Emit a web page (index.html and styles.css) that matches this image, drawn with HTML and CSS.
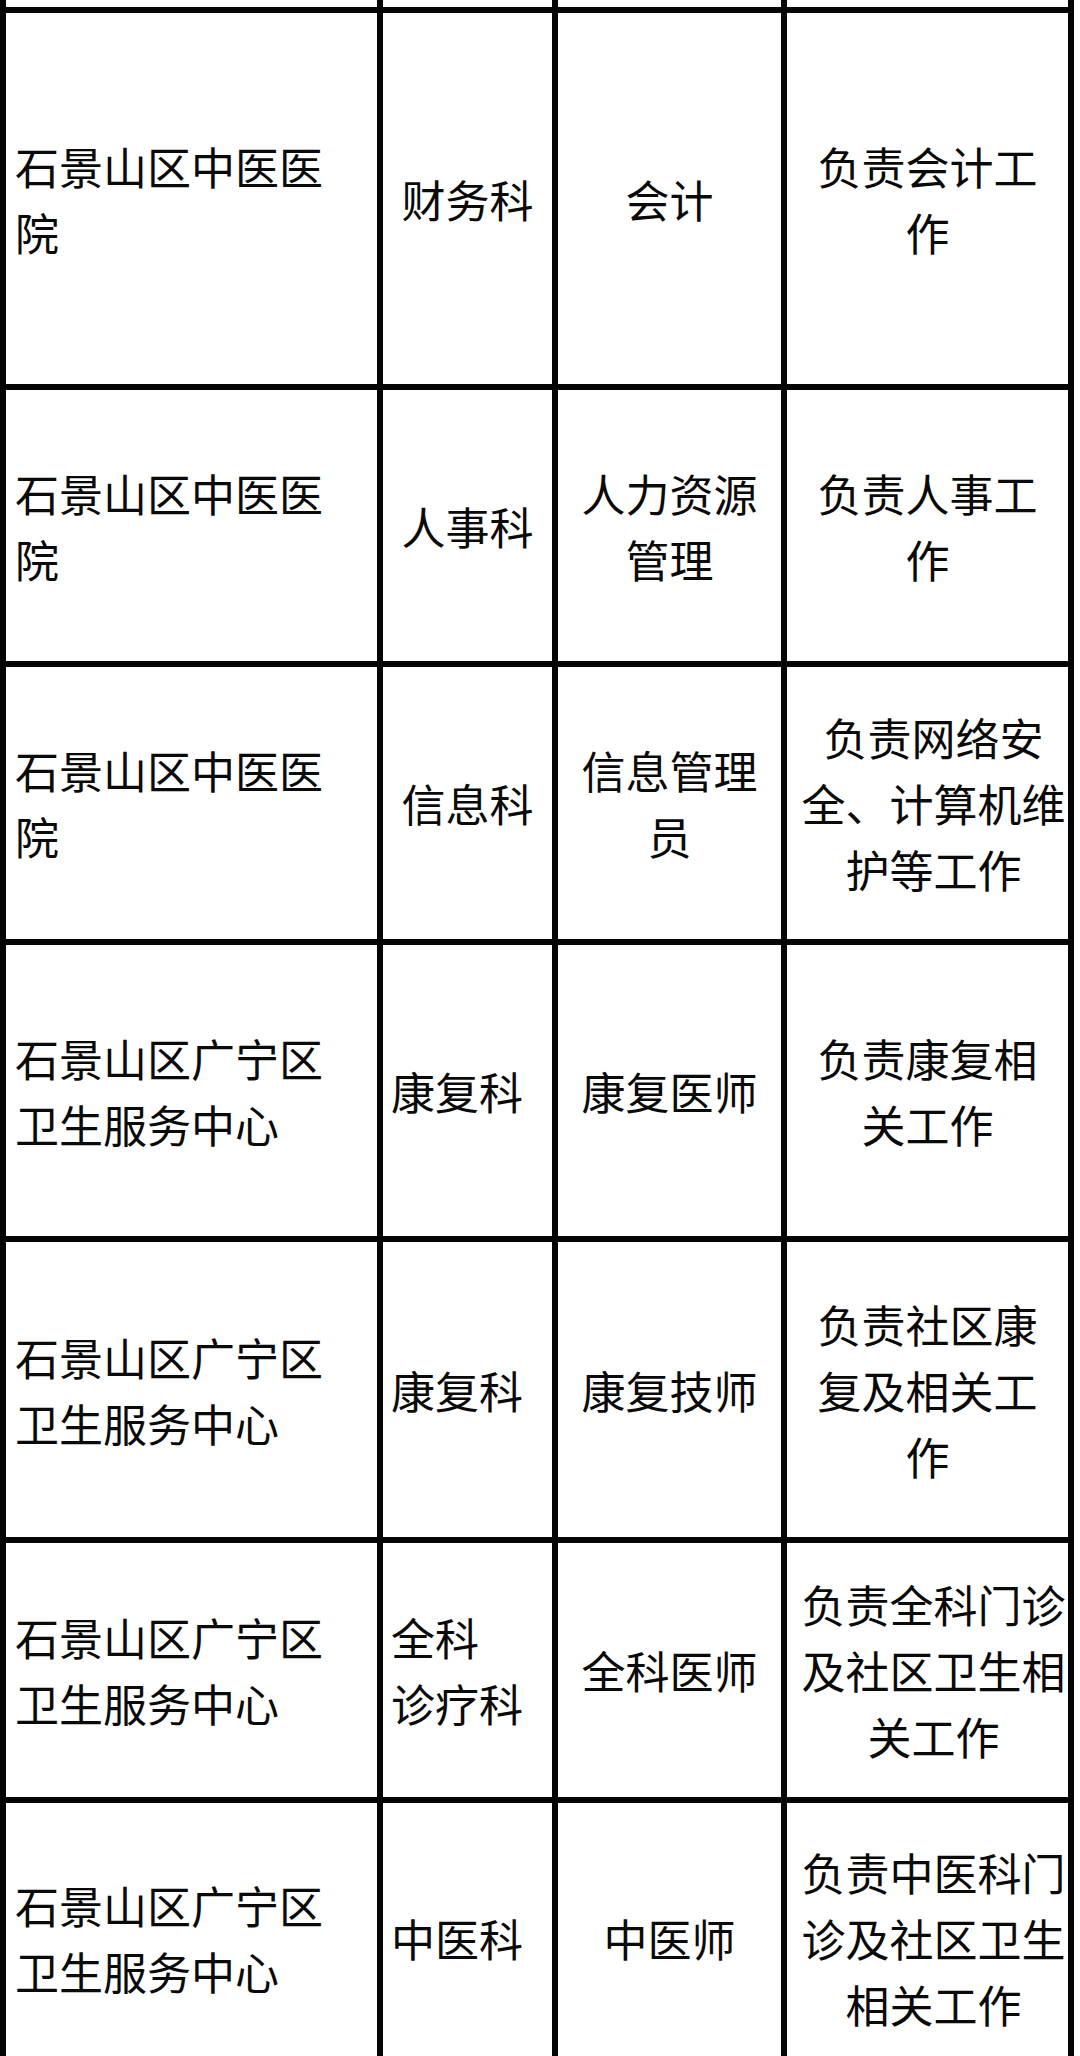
FILE: index.html
```html
<!DOCTYPE html>
<html lang="zh-CN">
<head>
<meta charset="utf-8">
<title>岗位表</title>
<link rel="stylesheet" href="styles.css">
</head>
<body>
<div class="sheet" role="table">
  <div class="cell cut"></div><div class="cell cut"></div><div class="cell cut"></div><div class="cell cut"></div>

  <div class="cell unit">石景山区中医医<br>院</div>
  <div class="cell mid">财务科</div>
  <div class="cell mid">会计</div>
  <div class="cell duty">负责会计工<br>作</div>

  <div class="cell unit">石景山区中医医<br>院</div>
  <div class="cell mid">人事科</div>
  <div class="cell mid">人力资源<br>管理</div>
  <div class="cell duty">负责人事工<br>作</div>

  <div class="cell unit">石景山区中医医<br>院</div>
  <div class="cell mid">信息科</div>
  <div class="cell mid">信息管理<br>员</div>
  <div class="cell duty wide">负责网络安<br>全、计算机维<br>护等工作</div>

  <div class="cell unit">石景山区广宁区<br>卫生服务中心</div>
  <div class="cell left">康复科</div>
  <div class="cell mid">康复医师</div>
  <div class="cell duty">负责康复相<br>关工作</div>

  <div class="cell unit">石景山区广宁区<br>卫生服务中心</div>
  <div class="cell left">康复科</div>
  <div class="cell mid">康复技师</div>
  <div class="cell duty">负责社区康<br>复及相关工<br>作</div>

  <div class="cell unit">石景山区广宁区<br>卫生服务中心</div>
  <div class="cell left">全科<br>诊疗科</div>
  <div class="cell mid">全科医师</div>
  <div class="cell duty wide">负责全科门诊<br>及社区卫生相<br>关工作</div>

  <div class="cell unit">石景山区广宁区<br>卫生服务中心</div>
  <div class="cell left">中医科</div>
  <div class="cell mid">中医师</div>
  <div class="cell duty wide">负责中医科门<br>诊及社区卫生<br>相关工作</div>
</div>
</body>
</html>
```

FILE: styles.css
```css
html, body {
  margin: 0;
  padding: 0;
  background: #ffffff;
}

body {
  width: 1080px;
  height: 2056px;
  overflow: hidden;
}

.sheet {
  width: 1074px;
  box-sizing: border-box;
  display: grid;
  grid-template-columns: 371px 169px 223px 281px;
  grid-template-rows: 7px 371px 271px 272px 291px 295px 254px 270px;
  gap: 6px;
  padding: 0 6px 6px 6px;
  background: #050505;
  font-family: "Noto Sans CJK SC", "Noto Sans", sans-serif;
  font-size: 44px;
  line-height: 66px;
  color: #0a0a0a;
}

.cell {
  background: #ffffff;
  display: flex;
  align-items: center;
  white-space: nowrap;
  box-sizing: border-box;
}

.cut {
  display: block;
}

.unit {
  justify-content: flex-start;
  text-align: left;
  padding-left: 9px;
}

.left {
  justify-content: flex-start;
  text-align: left;
  padding-left: 8px;
}

.mid {
  justify-content: center;
  text-align: center;
}

.duty {
  justify-content: center;
  text-align: center;
}

.duty.wide {
  padding-left: 12px;
}
```
